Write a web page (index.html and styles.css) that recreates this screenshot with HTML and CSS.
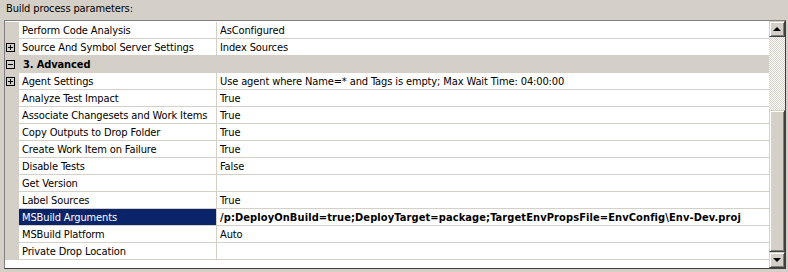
FILE: index.html
```html
<!DOCTYPE html>
<html lang="en">
<head>
    <meta charset="UTF-8">
    <title>Build process parameters</title>
    <link rel="stylesheet" href="styles.css">
</head>
<body>

    <div class="caption">Build process parameters:</div>

    <div class="grid-frame">
        <div class="grid">
            <div class="row">
                <span class="glyph"></span>
                <span class="name">Perform Code Analysis</span>
                <span class="value">AsConfigured</span>
            </div>
            <div class="row">
                <span class="glyph"><span class="box plus"></span></span>
                <span class="name">Source And Symbol Server Settings</span>
                <span class="value">Index Sources</span>
            </div>
            <div class="row category">
                <span class="glyph"><span class="box"></span></span>
                <span class="name">3. Advanced</span>
            </div>
            <div class="row">
                <span class="glyph"><span class="box plus"></span></span>
                <span class="name">Agent Settings</span>
                <span class="value">Use agent where Name=* and Tags is empty; Max Wait Time: 04:00:00</span>
            </div>
            <div class="row">
                <span class="glyph"></span>
                <span class="name">Analyze Test Impact</span>
                <span class="value">True</span>
            </div>
            <div class="row">
                <span class="glyph"></span>
                <span class="name">Associate Changesets and Work Items</span>
                <span class="value">True</span>
            </div>
            <div class="row">
                <span class="glyph"></span>
                <span class="name">Copy Outputs to Drop Folder</span>
                <span class="value">True</span>
            </div>
            <div class="row">
                <span class="glyph"></span>
                <span class="name">Create Work Item on Failure</span>
                <span class="value">True</span>
            </div>
            <div class="row">
                <span class="glyph"></span>
                <span class="name">Disable Tests</span>
                <span class="value">False</span>
            </div>
            <div class="row">
                <span class="glyph"></span>
                <span class="name">Get Version</span>
                <span class="value"></span>
            </div>
            <div class="row">
                <span class="glyph"></span>
                <span class="name">Label Sources</span>
                <span class="value">True</span>
            </div>
            <div class="row selected">
                <span class="glyph"></span>
                <span class="name">MSBuild Arguments</span>
                <span class="value">/p:DeployOnBuild=true;DeployTarget=package;TargetEnvPropsFile=EnvConfig\Env-Dev.proj</span>
            </div>
            <div class="row">
                <span class="glyph"></span>
                <span class="name">MSBuild Platform</span>
                <span class="value">Auto</span>
            </div>
            <div class="row">
                <span class="glyph"></span>
                <span class="name">Private Drop Location</span>
                <span class="value"></span>
            </div>
        </div>

        <div class="scrollbar">
            <div class="sb-btn"><span class="arrow-up"></span></div>
            <div class="sb-track"></div>
            <div class="sb-thumb"></div>
            <div class="sb-btn"><span class="arrow-down"></span></div>
        </div>
    </div>

</body>
</html>
```

FILE: styles.css
```css
body {
    font-family: "DejaVu Sans Condensed", "DejaVu Sans", sans-serif;
    font-size: 11px;
    letter-spacing: -0.12px;
    margin: 0;
    padding: 0;
    background-color: #d4d0c8;
    color: #000;
}

.caption {
    height: 20px;
    line-height: 17px;
    padding-left: 6px;
}

.grid-frame {
    display: flex;
    width: 782px;
    height: 249px;
    margin-left: 4px;
    box-sizing: border-box;
    border: 1px solid #808080;
    border-right-color: #404040;
    border-bottom-color: #404040;
    background-color: #fff;
}

.grid {
    flex: 1;
    padding-top: 1px;
    overflow: hidden;
}

.row {
    display: flex;
    height: 17px;
    white-space: nowrap;
}

.glyph {
    width: 14px;
    flex-shrink: 0;
    background-color: #d4d0c8;
    display: flex;
    align-items: center;
    padding-left: 1px;
    box-sizing: border-box;
}

.box {
    position: relative;
    width: 9px;
    height: 9px;
    box-sizing: border-box;
    border: 1px solid #000;
}

/* minus bar */
.box::before {
    content: "";
    position: absolute;
    left: 1px;
    top: 3px;
    width: 5px;
    height: 1px;
    background-color: #000;
}

/* plus bar */
.box.plus::after {
    content: "";
    position: absolute;
    left: 3px;
    top: 1px;
    width: 1px;
    height: 5px;
    background-color: #000;
}

.name,
.value {
    line-height: 16px;
    padding-top: 1px;
    height: 16px;
    box-sizing: border-box;
    border-bottom: 1px solid #d4d0c8;
    overflow: hidden;
}

.name {
    width: 198px;
    flex-shrink: 0;
    padding-left: 3px;
    border-right: 1px solid #d4d0c8;
    height: 17px;
}

.value {
    flex: 1;
    padding-left: 3px;
    height: 17px;
}

.category .name {
    flex: 1;
    font-weight: bold;
    padding-left: 4px;
    background-color: #d4d0c8;
    border-right: none;
}

.selected .name {
    background-color: #0a246a;
    color: #fff;
}

.selected .value {
    font-weight: bold;
    letter-spacing: 0.1px;
}

/* Scrollbar */
.scrollbar {
    width: 16px;
    display: flex;
    flex-direction: column;
    background-color: #d4d0c8;
}

.sb-btn,
.sb-thumb {
    box-sizing: border-box;
    background-color: #d4d0c8;
    border-top: 1px solid #d4d0c8;
    border-left: 1px solid #d4d0c8;
    border-right: 1px solid #404040;
    border-bottom: 1px solid #404040;
    box-shadow: inset 1px 1px 0 #fff, inset -1px -1px 0 #808080;
}

.sb-btn {
    height: 16px;
    display: flex;
    align-items: center;
    justify-content: center;
}

.sb-track {
    height: 73px;
    background: repeating-conic-gradient(#fff 0 25%, #d4d0c8 0 50%) 0 0 / 2px 2px;
}

.sb-thumb {
    flex: 1;
}

.arrow-up {
    width: 0;
    height: 0;
    border-left: 4px solid transparent;
    border-right: 4px solid transparent;
    border-bottom: 4px solid #000;
}

.arrow-down {
    width: 0;
    height: 0;
    border-left: 4px solid transparent;
    border-right: 4px solid transparent;
    border-top: 4px solid #000;
}
```
